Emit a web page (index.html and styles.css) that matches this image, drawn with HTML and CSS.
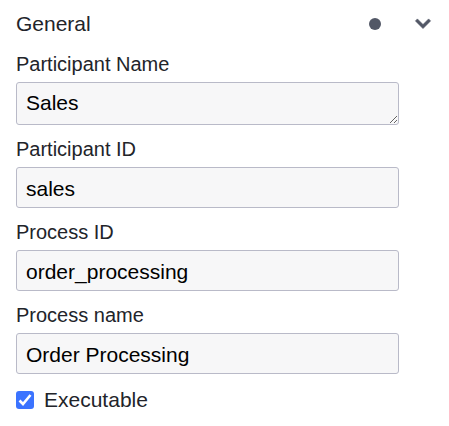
FILE: index.html
```html
<!DOCTYPE html>
<html lang="en">
<head>
<meta charset="utf-8">
<title>Properties</title>
<link rel="stylesheet" href="styles.css">
</head>
<body>
<section class="group">
  <header class="group-header">
    <h2 class="group-title">General</h2>
    <span class="marker"></span>
    <button class="toggle" type="button" aria-label="Toggle section">
      <svg width="18" height="12" viewBox="0 0 18 12"><path d="M1.4 2.9L3.4 0.9L9 6.5L14.6 0.9L16.6 2.9L9 10.6Z" fill="#525766" stroke="#525766" stroke-width="0.6" stroke-linejoin="round"/></svg>
    </button>
  </header>
  <form class="entries">
    <div class="entry">
      <label class="label" for="participant-name">Participant Name</label>
      <textarea class="field area" id="participant-name" rows="1" spellcheck="false">Sales</textarea>
    </div>
    <div class="entry">
      <label class="label" for="participant-id">Participant ID</label>
      <input class="field" id="participant-id" type="text" value="sales" spellcheck="false">
    </div>
    <div class="entry">
      <label class="label" for="process-id">Process ID</label>
      <input class="field" id="process-id" type="text" value="order_processing" spellcheck="false">
    </div>
    <div class="entry">
      <label class="label" for="process-name">Process name</label>
      <input class="field" id="process-name" type="text" value="Order Processing" spellcheck="false">
    </div>
    <div class="check-entry">
      <input class="check" id="executable" type="checkbox" checked>
      <label class="check-label" for="executable">Executable</label>
    </div>
  </form>
</section>
</body>
</html>
```
FILE: styles.css
```css
* {
  box-sizing: border-box;
}

body {
  margin: 0;
  background: #fff;
  color: #22242a;
  font-family: "Liberation Sans", Arial, sans-serif;
  font-size: 21px;
}

.group-header {
  display: flex;
  align-items: center;
  height: 48px;
  padding: 0 14px 0 16px;
}

.group-title {
  flex: 1;
  margin: 0;
  font-size: 21px;
  font-weight: 400;
  line-height: 24px;
}

.marker {
  width: 12px;
  height: 12px;
  margin-right: 30px;
  border-radius: 50%;
  background: #525766;
}

.toggle {
  display: flex;
  align-items: center;
  justify-content: center;
  width: 24px;
  height: 24px;
  padding: 0;
  border: 0;
  background: none;
}

.entries {
  display: flex;
  flex-direction: column;
  gap: 12px;
  padding: 4px 50px 12px 16px;
}

.entry {
  display: flex;
  flex-direction: column;
  gap: 6px;
}

.label {
  font-size: 20px;
  line-height: 24px;
}

.field {
  display: block;
  width: 100%;
  height: 41px;
  margin: 0;
  padding: 2px 9px 0;
  border: 1px solid #b9bac8;
  border-radius: 3px;
  background: #f7f7f8;
  color: #000;
  font: inherit;
}

.area {
  height: 43px;
  padding-top: 8px;
  line-height: 24px;
  overflow: hidden;
  resize: vertical;
}

.check-entry {
  display: flex;
  align-items: center;
  gap: 10px;
  height: 28px;
}

.check {
  appearance: none;
  width: 18px;
  height: 18px;
  margin: 0;
  border-radius: 3px;
  background: #3b73ff url("data:image/svg+xml,%3Csvg xmlns='http://www.w3.org/2000/svg' viewBox='0 0 18 18'%3E%3Cpath d='M3.5 9.5L7 13L14.5 4' fill='none' stroke='white' stroke-width='2.6'/%3E%3C/svg%3E") center / 18px no-repeat;
}

.check:not(:checked) {
  border: 1px solid #b9bac8;
  background: #fff;
}

.check-label {
  line-height: 24px;
}
```
